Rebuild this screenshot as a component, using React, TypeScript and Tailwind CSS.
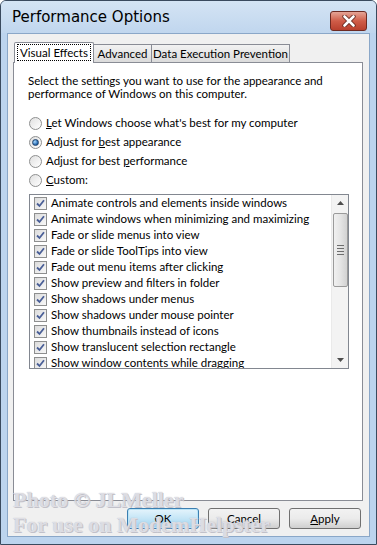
import React from "react";

const font = { fontFamily: 'Lato, "Noto Sans", sans-serif' };

const items = [
  "Animate controls and elements inside windows",
  "Animate windows when minimizing and maximizing",
  "Fade or slide menus into view",
  "Fade or slide ToolTips into view",
  "Fade out menu items after clicking",
  "Show preview and filters in folder",
  "Show shadows under menus",
  "Show shadows under mouse pointer",
  "Show thumbnails instead of icons",
  "Show translucent selection rectangle",
  "Show window contents while dragging",
];

function Radio({ checked }: { checked?: boolean }) {
  return (
    <span className="w-[13px] h-[13px] rounded-full border border-[#8e8f8f] bg-gradient-to-br from-[#e0e0e0] to-[#ffffff] flex items-center justify-center shrink-0">
      {checked && (
        <span className="w-[7px] h-[7px] rounded-full bg-[radial-gradient(circle_at_35%_35%,#a6d8ff,#1b5fa8_70%)] border border-[#24456d]" />
      )}
    </span>
  );
}

function Check() {
  return (
    <span className="w-[13px] h-[13px] border border-[#8e8f8f] bg-gradient-to-br from-[#dcdcdc] to-[#f8f8f8] flex items-center justify-center shrink-0">
      <svg width="9" height="9" viewBox="0 0 9 9">
        <path d="M1 4.5 L3.5 7 L8 1.2" fill="none" stroke="#4a5f97" strokeWidth="1.8" />
      </svg>
    </span>
  );
}

export default function App() {
  return (
    <div className="w-[377px] h-[545px] relative overflow-hidden bg-[#bcd4ee] border border-[#3a4a5e] rounded-t-[6px] flex flex-col" style={font}>
      {/* Title bar */}
      <div className="h-[32px] shrink-0 flex items-center justify-between pl-[11px] pr-[9px] bg-gradient-to-b from-[#d4e4f4] to-[#c0d6ee]">
        <span className="text-[15px] text-black mt-[1px]" style={{ fontFamily: '"DejaVu Sans", sans-serif' }}>
          Performance Options
        </span>
        <span className="w-[37px] h-[20px] mt-[8px] rounded-[3px] border border-[#6d2a22] bg-gradient-to-b from-[#e4a496] via-[#cf5c48] to-[#b9402e] flex items-center justify-center">
          <svg width="14" height="12" viewBox="0 0 14 12">
            <path d="M2.5 1.5 L11.5 10.5 M11.5 1.5 L2.5 10.5" stroke="#5a2018" strokeWidth="4.2" strokeLinecap="round" />
            <path d="M2.5 1.5 L11.5 10.5 M11.5 1.5 L2.5 10.5" stroke="#ffffff" strokeWidth="2.6" strokeLinecap="round" />
          </svg>
        </span>
      </div>

      {/* Client area */}
      <div className="mx-[6px] h-[504px] bg-[#f0f0f0] border border-[#8aa7c8] flex flex-col">
        {/* Tabs */}
        <div className="flex items-end pl-[6px] pt-[7px] h-[28px] text-[11.5px] text-black whitespace-nowrap">
          <div className="h-[21px] w-[80px] bg-white border border-[#898c95] border-b-0 rounded-t-[2px] flex items-center justify-center relative z-10 mb-[-1px] pb-[1px]">
            <span className="border border-dotted border-black px-[2px] leading-[15px]">Visual Effects</span>
          </div>
          <div className="h-[18px] w-[58px] bg-gradient-to-b from-[#f2f2f2] to-[#dbdbdb] border border-[#898c95] border-b-0 border-l-0 flex items-center justify-center">
            Advanced
          </div>
          <div className="h-[18px] w-[138px] bg-gradient-to-b from-[#f2f2f2] to-[#dbdbdb] border border-[#898c95] border-b-0 border-l-0 flex items-center justify-center">
            Data Execution Prevention
          </div>
        </div>
        {/* Panel */}
        <div className="ml-[5px] w-[350px] h-[439px] bg-white border border-[#898c95] text-[11.5px] text-black pl-[14px] pt-[11px]">
          <div className="leading-[13px]">
            Select the settings you want to use for the appearance and
            <br />
            performance of Windows on this computer.
          </div>
          <div className="mt-[15px] flex flex-col gap-[3px] pl-[1px]">
            <div className="flex items-center gap-[4px] h-[16px]">
              <Radio />
              <span><u>L</u>et Windows choose what's best for my computer</span>
            </div>
            <div className="flex items-center gap-[4px] h-[16px]">
              <Radio checked />
              <span>Adjust for <u>b</u>est appearance</span>
            </div>
            <div className="flex items-center gap-[4px] h-[16px]">
              <Radio />
              <span>Adjust for best <u>p</u>erformance</span>
            </div>
            <div className="flex items-center gap-[4px] h-[16px]">
              <Radio />
              <span><u>C</u>ustom:</span>
            </div>
          </div>
          {/* List */}
          <div className="mt-[6px] ml-[1px] w-[320px] h-[175px] border border-[#828790] bg-white flex overflow-hidden">
            <div className="flex-1 pl-[4px] overflow-hidden">
              {items.map((t) => (
                <div key={t} className="h-[16px] flex items-center gap-[4px] whitespace-nowrap">
                  <Check />
                  <span>{t}</span>
                </div>
              ))}
            </div>
            <div className="w-[17px] h-full bg-[#f3f3f3] border-l border-[#eaeaea] flex flex-col items-center">
              <div className="h-[16px] flex items-center justify-center">
                <svg width="7" height="4" viewBox="0 0 7 4"><path d="M0 4 L3.5 0 L7 4 Z" fill="#4d4d4d" /></svg>
              </div>
              <div className="mt-[2px] w-[15px] h-[74px] rounded-[2px] border border-[#9a9a9a] bg-gradient-to-r from-[#f0f0f0] via-[#e4e4e4] to-[#d2d2d2] flex flex-col items-center justify-center gap-[2px]">
                <span className="w-[7px] h-[1px] bg-[#6d6d6d]" />
                <span className="w-[7px] h-[1px] bg-[#6d6d6d]" />
                <span className="w-[7px] h-[1px] bg-[#6d6d6d]" />
                <span className="w-[7px] h-[1px] bg-[#6d6d6d]" />
              </div>
              <div className="flex-1" />
              <div className="h-[16px] flex items-center justify-center">
                <svg width="7" height="4" viewBox="0 0 7 4"><path d="M0 0 L3.5 4 L7 0 Z" fill="#4d4d4d" /></svg>
              </div>
            </div>
          </div>
        </div>
        {/* Buttons */}
        <div className="flex justify-end gap-[9px] pr-[8px] pt-[7px] text-[11.5px] text-black">
          <button className="w-[72px] h-[21px] rounded-[3px] border border-[#3c7fb1] bg-gradient-to-b from-[#e5f4fc] via-[#c4e5f6] to-[#98d1ef] shadow-[inset_0_0_0_1px_#b8e4f8]">OK</button>
          <button className="w-[72px] h-[21px] rounded-[3px] border border-[#707070] bg-gradient-to-b from-[#f2f2f2] via-[#ebebeb] to-[#cfcfcf]">Cancel</button>
          <button className="w-[72px] h-[21px] rounded-[3px] border border-[#707070] bg-gradient-to-b from-[#f2f2f2] via-[#ebebeb] to-[#cfcfcf]"><u>A</u>pply</button>
        </div>
      </div>

      {/* Watermark */}
      <div className="absolute left-[12px] top-[486px] pointer-events-none text-[22px] font-bold leading-[25px] text-[#f0f0f6]/70 whitespace-nowrap" style={{ fontFamily: '"Liberation Serif", serif', textShadow: "0 0 1px #b0b0b8, 1px 1px 0 #c4c4cc" }}>
        <div>Photo © JLMeller</div>
        <div>For use on ModemHelpster</div>
      </div>
    </div>
  );
}
